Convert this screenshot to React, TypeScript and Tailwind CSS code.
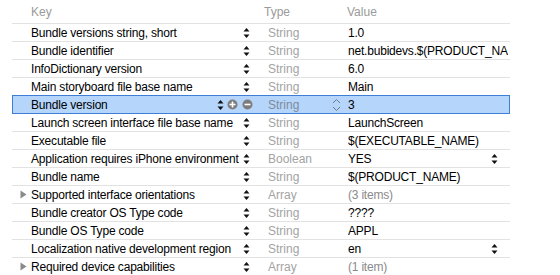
import React from "react";

interface Row {
  key: string;
  type: string;
  value: string;
  expandable?: boolean;
  popup?: boolean;
  selected?: boolean;
  dim?: boolean;
}

const rows: Row[] = [
  { key: "Bundle versions string, short", type: "String", value: "1.0" },
  { key: "Bundle identifier", type: "String", value: "net.bubidevs.$(PRODUCT_NA" },
  { key: "InfoDictionary version", type: "String", value: "6.0" },
  { key: "Main storyboard file base name", type: "String", value: "Main" },
  { key: "Bundle version", type: "String", value: "3", selected: true },
  { key: "Launch screen interface file base name", type: "String", value: "LaunchScreen" },
  { key: "Executable file", type: "String", value: "$(EXECUTABLE_NAME)" },
  { key: "Application requires iPhone environment", type: "Boolean", value: "YES", popup: true },
  { key: "Bundle name", type: "String", value: "$(PRODUCT_NAME)" },
  { key: "Supported interface orientations", type: "Array", value: "(3 items)", expandable: true, dim: true },
  { key: "Bundle creator OS Type code", type: "String", value: "????" },
  { key: "Bundle OS Type code", type: "String", value: "APPL" },
  { key: "Localization native development region", type: "String", value: "en", popup: true },
  { key: "Required device capabilities", type: "Array", value: "(1 item)", expandable: true, dim: true },
];

function Stepper() {
  return (
    <svg width="7" height="12" viewBox="0 0 7 12" className="block">
      <path d="M3.5 1 L6.5 4.5 L0.5 4.5 Z" fill="#111" />
      <path d="M3.5 11 L6.5 7.5 L0.5 7.5 Z" fill="#111" />
    </svg>
  );
}

function Chevrons() {
  return (
    <svg width="9" height="14" viewBox="0 0 9 14" className="block">
      <path d="M1 5 L4.5 1.5 L8 5" fill="none" stroke="#6b7a8c" strokeWidth="1" />
      <path d="M1 9 L4.5 12.5 L8 9" fill="none" stroke="#6b7a8c" strokeWidth="1" />
    </svg>
  );
}

function RoundButton({ minus }: { minus?: boolean }) {
  return (
    <svg width="11" height="11" viewBox="0 0 11 11" className="block">
      <circle cx="5.5" cy="5.5" r="5" fill="#7d7d7d" />
      <rect x="2.5" y="4.7" width="6" height="1.6" fill="#fff" />
      {!minus && <rect x="4.7" y="2.5" width="1.6" height="6" fill="#fff" />}
    </svg>
  );
}

export default function App() {
  return (
    <div
      className="w-[560px] h-[275px] overflow-hidden bg-white text-[12px] text-black"
      style={{ fontFamily: '"Liberation Sans", Arial, sans-serif' }}
    >
      <div className="ml-[12px] w-[498px]">
        <div className="flex h-[24px] items-center border-b border-[#e2e2e2] text-[#9a9a9a]">
          <div className="w-[19px]" />
          <div className="w-[233px]">Key</div>
          <div className="w-[83px]">Type</div>
          <div>Value</div>
        </div>

        {rows.map((r) =>
          r.selected ? (
            <div
              key={r.key}
              className="-mt-px flex h-[19px] items-center border border-[#3d7fd6] bg-[#b5d5fb]"
            >
              <div className="w-[18px]" />
              <div className="w-[186px] truncate tracking-[-0.2px]">{r.key}</div>
              <div className="w-[10px]">
                <Stepper />
              </div>
              <div className="w-[15px]">
                <RoundButton />
              </div>
              <div className="w-[26px]">
                <RoundButton minus />
              </div>
              <div className="w-[64px] text-[#7f8c9c]">{r.type}</div>
              <div className="w-[16px]">
                <Chevrons />
              </div>
              <div>{r.value}</div>
            </div>
          ) : (
            <div key={r.key} className="flex h-[18px] items-center border-b border-[#e2e2e2]">
              <div className="flex w-[19px] justify-center pl-[4px]">
                {r.expandable && (
                  <svg width="7" height="9" viewBox="0 0 7 9" className="block">
                    <path d="M0.5 0.5 L6.5 4.5 L0.5 8.5 Z" fill="#8a8a8a" />
                  </svg>
                )}
              </div>
              <div className="w-[212px] whitespace-nowrap tracking-[-0.2px]">{r.key}</div>
              <div className="w-[25px]">
                <Stepper />
              </div>
              <div className="w-[80px] text-[#a3a3a3]">{r.type}</div>
              <div
                className={`flex-1 overflow-hidden whitespace-nowrap tracking-[-0.2px] ${r.dim ? "text-[#8a8a8a]" : ""}`}
              >
                {r.value}
              </div>
              {r.popup && (
                <div className="w-[19px]">
                  <Stepper />
                </div>
              )}
            </div>
          )
        )}
      </div>
    </div>
  );
}
